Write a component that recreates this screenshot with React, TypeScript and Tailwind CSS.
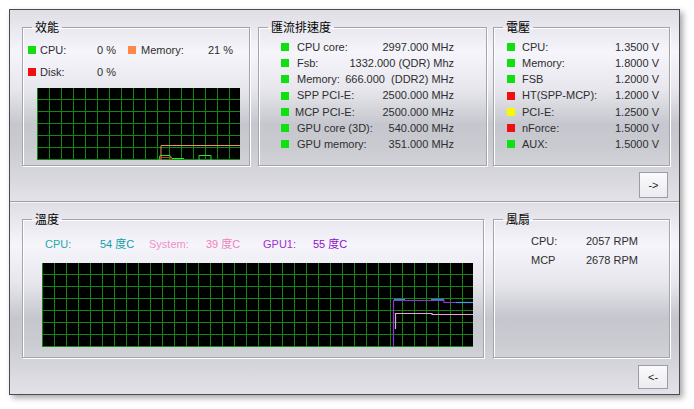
import React from "react";

const panelBg =
  "bg-[linear-gradient(180deg,#dedee4_0%,#f5f5fb_22%,#e6e6ec_42%,#c6c6ce_60%,#cacad1_72%,#e2e2e8_100%)]";

const GroupBox: React.FC<{
  title: string;
  className: string;
  children?: React.ReactNode;
}> = ({ title, className, children }) => {
  return (
    <fieldset
      className={`border border-[#a4a4ac] shadow-[inset_1px_1px_0_#ffffff,1px_1px_0_#ffffff] ${className}`}
    >
      <legend className="ml-[9px] px-[3px] text-[12px] leading-[14px] text-black font-['Noto_Sans_CJK_TC',sans-serif]">
        {title}
      </legend>
      {children}
    </fieldset>
  );
};

const Sq: React.FC<{ c: string }> = ({ c }) => (
  <span className={`inline-block w-[8px] h-[8px] shrink-0 ${c}`} />
);

const Grid: React.FC<{ w: number; h: number; children?: React.ReactNode }> = ({
  w,
  h,
  children,
}) => {
  const xs: number[] = [];
  for (let x = 0; x < w; x += 12) xs.push(x);
  const ys: number[] = [];
  for (let y = 11; y < h; y += 12) ys.push(y);
  return (
    <svg width={w} height={h} className="block">
      <rect width={w} height={h} fill="#000" />
      {xs.map((x) => (
        <line key={"v" + x} x1={x + 0.5} y1={0} x2={x + 0.5} y2={h} stroke="#128812" strokeWidth={1} />
      ))}
      {ys.map((y) => (
        <line key={"h" + y} x1={0} y1={y + 0.5} x2={w} y2={y + 0.5} stroke="#128812" strokeWidth={1} />
      ))}
      {children}
    </svg>
  );
};

const busRows = [
  ["CPU core:", "2997.000 MHz"],
  ["Fsb:", "1332.000 (QDR) Mhz"],
  ["Memory:", "666.000  (DDR2) MHz"],
  ["SPP PCI-E:", "2500.000 MHz"],
  ["MCP PCI-E:", "2500.000 MHz"],
  ["GPU core (3D):", "540.000 MHz"],
  ["GPU memory:", "351.000 MHz"],
];

const voltRows = [
  ["CPU:", "1.3500 V", "bg-[#10e010]"],
  ["Memory:", "1.8000 V", "bg-[#10e010]"],
  ["FSB", "1.2000 V", "bg-[#10e010]"],
  ["HT(SPP-MCP):", "1.2000 V", "bg-[#ee1010]"],
  ["PCI-E:", "1.2500 V", "bg-[#f8f800]"],
  ["nForce:", "1.5000 V", "bg-[#ee1010]"],
  ["AUX:", "1.5000 V", "bg-[#10e010]"],
];

const Button: React.FC<{ label: string; className: string }> = ({ label, className }) => (
  <button
    className={`border border-[#9c9ca4] bg-[linear-gradient(180deg,#fafafc,#ececf0)] text-[11px] text-[#222] flex items-center justify-center ${className}`}
  >
    {label}
  </button>
);

export default function App() {
  return (
    <div className="w-[694px] h-[409px] bg-white pt-[9px] pl-[9px] font-['Liberation_Sans','Noto_Sans_CJK_TC',sans-serif] text-[11px] text-[#2e2e2e]">
      <div className="w-[671px] h-[386px] border border-[#4c4c50] bg-[#e8e8ec] flex flex-col shadow-[3px_3px_6px_rgba(0,0,0,0.35)]">
        {/* top panel */}
        <div className={`h-[192px] border-b border-[#a0a0a8] pt-[10px] pl-[12px] pr-[9px] flex flex-col ${panelBg}`}>
          <div className="flex">
            <GroupBox title="效能" className="w-[228px] h-[146px]">
              <div className="pl-[5px] pt-[8px] flex flex-col">
                <div className="flex items-center h-[16px]">
                  <Sq c="bg-[#10e010]" />
                  <div className="ml-[4px] w-[76px] flex justify-between">
                    <span>CPU:</span>
                    <span>0 %</span>
                  </div>
                  <span className="ml-[12px]">
                    <Sq c="bg-[#ff8848]" />
                  </span>
                  <div className="ml-[5px] w-[92px] flex justify-between">
                    <span>Memory:</span>
                    <span>21 %</span>
                  </div>
                </div>
                <div className="flex items-center h-[16px] mt-[6px]">
                  <Sq c="bg-[#ee1010]" />
                  <div className="ml-[4px] w-[76px] flex justify-between">
                    <span>Disk:</span>
                    <span>0 %</span>
                  </div>
                </div>
                <div className="ml-[9px] mt-[8px]">
                  <Grid w={203} h={72}>
                    <polyline points="124,72 124,57.5 203,57.5" fill="none" stroke="#f09060" strokeWidth={1} />
                    <polyline points="122,72 123,67.5 133,67.5 135,70.5 147,70.5" fill="none" stroke="#30e030" strokeWidth={1} />
                    <polyline points="162,72 162,67.5 174,67.5 174,72" fill="none" stroke="#30e030" strokeWidth={1} />
                    <polyline points="124,72 124,69.5 134,69.5 134,72" fill="none" stroke="#e03020" strokeWidth={1} />
                  </Grid>
                </div>
              </div>
            </GroupBox>
            <GroupBox title="匯流排速度" className="ml-[8px] w-[229px] h-[146px]">
              <div className="pt-[5px] pl-[22px] pr-[32px] flex flex-col">
                {busRows.map(([l, v]) => (
                  <div key={l} className="flex items-center h-[16.2px]">
                    <Sq c="bg-[#10e010]" />
                    <span className={l === "MCP PCI-E:" ? "ml-[6px]" : "ml-[8px]"}>{l}</span>
                    <span className="ml-auto whitespace-pre">{v}</span>
                  </div>
                ))}
              </div>
            </GroupBox>
            <GroupBox title="電壓" className="ml-[6px] w-[177px] h-[146px]">
              <div className="pt-[5px] pl-[13px] pr-[10px] flex flex-col">
                {voltRows.map(([l, v, c]) => (
                  <div key={l} className="flex items-center h-[16.2px]">
                    <Sq c={c} />
                    <span className="ml-[7px]">{l}</span>
                    <span className="ml-auto">{v}</span>
                  </div>
                ))}
              </div>
            </GroupBox>
          </div>
          <div className="flex justify-end pr-[2px] mt-[6px]">
            <Button label="->" className="w-[29px] h-[26px]" />
          </div>
        </div>

        {/* bottom panel */}
        <div className={`flex-1 border-t border-[#f4f4f8] pt-[9px] pl-[12px] pr-[9px] flex flex-col ${panelBg}`}>
          <div className="flex">
            <GroupBox title="溫度" className="w-[462px] h-[146px]">
              <div className="pl-[22px] pt-[10px] flex items-center h-[26px]">
                <span className="w-[55px] text-[#28a8a8]">CPU:</span>
                <span className="w-[49px] text-[#10a0a8]">54 度C</span>
                <span className="w-[57px] text-[#f090cc]">System:</span>
                <span className="w-[57px] text-[#f080c0]">39 度C</span>
                <span className="w-[50px] text-[#a030d0]">GPU1:</span>
                <span className="text-[#9010c8]">55 度C</span>
              </div>
              <div className="ml-[19px] mt-[11px]">
                <Grid w={431} h={84}>
                  <polyline points="351.5,84 351.5,37.5 402,37.5 402,39.5 431,39.5" fill="none" stroke="#9030e0" strokeWidth={1.2} />
                  <polyline points="352,36.5 363,36.5" fill="none" stroke="#4080f0" strokeWidth={1.2} />
                  <polyline points="389,36.5 402,36.5" fill="none" stroke="#4080f0" strokeWidth={1.2} />
                  <polyline points="414,39.5 431,39.5" fill="none" stroke="#40a0e0" strokeWidth={1.2} />
                  <polyline points="353.5,66 353.5,50.5 390,50.5 390,51.5 431,51.5" fill="none" stroke="#f0a0dc" strokeWidth={1.2} />
                </Grid>
              </div>
            </GroupBox>
            <GroupBox title="風扇" className="ml-[9px] w-[177px] h-[146px]">
              <div className="pl-[37px] pt-[6px] flex flex-col">
                <div className="flex h-[19px] items-center">
                  <span className="w-[55px]">CPU:</span>
                  <span>2057 RPM</span>
                </div>
                <div className="flex h-[19px] items-center">
                  <span className="w-[55px]">MCP</span>
                  <span>2678 RPM</span>
                </div>
              </div>
            </GroupBox>
          </div>
          <div className="flex justify-end pr-[2px] mt-[7px]">
            <Button label="<-" className="w-[30px] h-[24px]" />
          </div>
        </div>
      </div>
    </div>
  );
}
